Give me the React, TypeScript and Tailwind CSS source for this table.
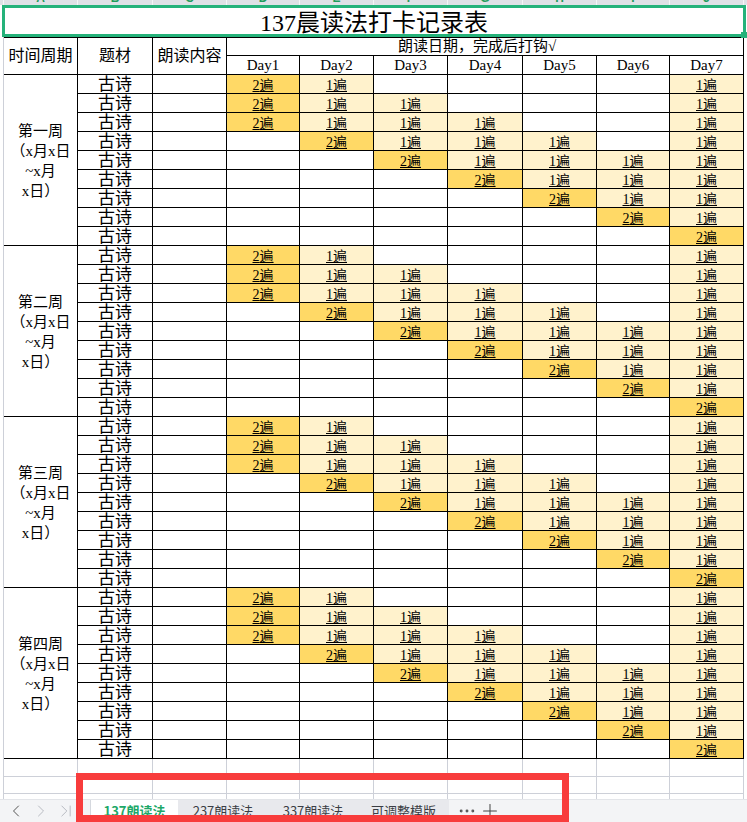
import { Fragment } from "react";
import { ChevronLast, ChevronLeft, ChevronRight, Ellipsis, Plus } from "lucide-react";

const cols = "grid grid-cols-[74px_75px_74px_73px_74px_74px_75px_74px_73px_74px]";
const weeks = ["第一周", "第二周", "第三周", "第四周"];
// per row, Day1..Day7: 2 = 2遍, 1 = 1遍, . = empty
const plan = ["21....1", "211...1", "2111..1", ".2111.1", "..21111", "...2111", "....211", ".....21", "......2"];
const days = ["Day1", "Day2", "Day3", "Day4", "Day5", "Day6", "Day7"];
const letters = ["A", "B", "C", "D", "E", "F", "G", "H", "I", "J"];
const tabs = ["237朗读法", "337朗读法", "可调整模版"];

function Reps({ v }: { v: string }) {
  const fill = v === "2" ? "bg-[#ffd966]" : v === "1" ? "bg-[#fff2cc]" : "";
  return (
    <div className={`flex h-[19px] items-end justify-center border-r border-b border-black ${fill}`}>
      {v !== "." ? (
        <span className="text-[14px] leading-none underline underline-offset-[1px]">{v}遍</span>
      ) : null}
    </div>
  );
}

function Week({ name }: { name: string }) {
  return (
    <>
      <div className="col-start-1 row-span-9 flex items-center justify-center border-r border-b border-black pt-[2px] text-center text-[15px] leading-[20px]">
        <div>
          {name}
          <br />（x月x日
          <br />~x月
          <br />x日）
        </div>
      </div>
      {plan.map((row, i) => (
        <Fragment key={i}>
          <div className="col-start-2 flex h-[19px] items-end justify-center border-r border-b border-black text-[17px] leading-none">
            古诗
          </div>
          <div className="h-[19px] border-r border-b border-black" />
          {row.split("").map((v, j) => (
            <Reps key={j} v={v} />
          ))}
        </Fragment>
      ))}
    </>
  );
}

export default function App() {
  return (
    <div className="relative h-[822px] w-[747px] overflow-hidden bg-white font-['Liberation_Serif','Noto_Sans_CJK_SC',serif] text-black">
      {/* column header strip, mostly scrolled away */}
      <div className="flex h-[5px] overflow-hidden bg-[#dfe1e6]">
        <div className="ml-[3px] border-l border-[#f4f5f7]">
          <div className={cols}>
            {letters.map((l) => (
              <div key={l} className="-mt-[8px] h-[13px] border-r border-[#f4f5f7] text-center font-['Liberation_Sans',sans-serif] text-[12px] font-bold leading-[12px] text-[#1f9d5c]">
                {l}
              </div>
            ))}
          </div>
        </div>
      </div>

      <div className="ml-[3px] w-[741px] border-l border-[#cdd0d8]">
        <div className={cols}>
          <div className="relative col-span-10 -mx-[2px] flex h-[32px] items-end justify-center border-[3px] border-[#25b27a] bg-white text-[24px] leading-none">
            <span className="translate-y-[1px]">137晨读法打卡记录表</span>
            <div className="absolute -right-[4px] -bottom-[4px] h-[6px] w-[6px] bg-[#25b27a]" />
          </div>

          <div className="row-span-2 flex h-[38px] items-center justify-center border-y border-r border-black text-[16px]">时间周期</div>
          <div className="row-span-2 flex h-[38px] items-center justify-center border-y border-r border-black text-[16px]">题材</div>
          <div className="row-span-2 flex h-[38px] items-center justify-center border-y border-r border-black text-[16px]">朗读内容</div>
          <div className="col-span-7 flex h-[19px] items-center justify-center border-y border-r border-black pr-[16px] text-[15px] leading-none">
            朗读日期，完成后打钩√
          </div>
          {days.map((d, i) => (
            <div
              key={d}
              className={`${i === 0 ? "col-start-4" : ""} flex h-[19px] items-end justify-center border-r border-b border-black pb-[1px] text-[15px] leading-none`}
            >
              {d}
            </div>
          ))}

          {weeks.map((w) => (
            <Week key={w} name={w} />
          ))}
        </div>

        {/* empty sheet rows under the table */}
        <div className={cols}>
          {letters.map((l) => (
            <div key={`a${l}`} className="h-[18px] border-r border-b border-[#cdd0d8]" />
          ))}
          {letters.map((l) => (
            <div key={`b${l}`} className="h-[17px] border-r border-b border-[#cdd0d8]" />
          ))}
          {letters.map((l) => (
            <div key={`c${l}`} className="h-[5px] border-r border-[#cdd0d8]" />
          ))}
        </div>
      </div>

      {/* sheet tabs */}
      <div className="flex h-[23px] items-stretch border-t border-[#e3e5e9] bg-[#f3f4f6] font-['Noto_Sans_CJK_SC',sans-serif] text-[13px]">
        <div className="flex w-[91px] items-center gap-[5px] border-r border-[#d5d8de] pl-[6px]">
          <ChevronLeft className="h-[20px] w-[20px] text-[#555]" strokeWidth={1.2} />
          <ChevronRight className="h-[20px] w-[20px] text-[#b8bbc2]" strokeWidth={1.2} />
          <ChevronLast className="h-[20px] w-[20px] text-[#b8bbc2]" strokeWidth={1.2} />
        </div>
        <div className="flex w-[87px] items-center justify-center bg-white font-bold text-[#1da868]">137朗读法</div>
        {tabs.map((t, i) => (
          <div
            key={t}
            className={`flex ${i === 2 ? "w-[91px]" : "w-[90px]"} items-center justify-center bg-[#e8e9ed] text-[#3a3d44]`}
          >
            {t}
          </div>
        ))}
        <div className="ml-[8px] flex items-center">
          <Ellipsis className="h-[20px] w-[20px] text-[#555]" strokeWidth={1.5} />
        </div>
        <div className="ml-[2px] flex items-center">
          <Plus className="h-[22px] w-[22px] text-[#444]" strokeWidth={1.1} />
        </div>
      </div>

      {/* annotation box */}
      <div className="absolute top-[773px] left-[76px] h-[49px] w-[493px] border-[7px] border-[#f83c3c]" />
    </div>
  );
}
